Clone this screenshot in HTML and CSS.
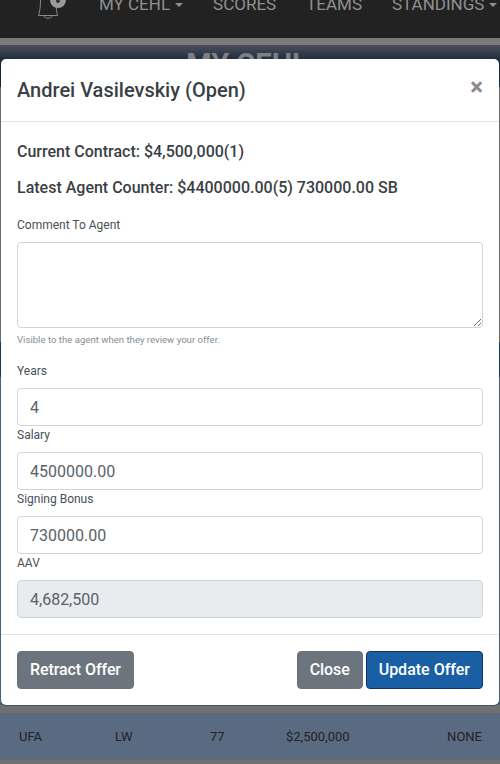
FILE: index.html
```html
<!DOCTYPE html>
<html lang="en">
<head>
  <meta charset="UTF-8">
  <title>Andrei Vasilevskiy (Open)</title>
  <link rel="stylesheet" href="styles.css">
</head>
<body>
  <div class="page">
    <nav class="navbar">
      <svg class="bell" viewBox="37 0 32 22" fill="none">
        <path d="M40.5 0C40.5 6 40 11 38.5 15.5H57.5C56.5 11 56 8 56 0" stroke="#8a8a8a" stroke-width="1"/>
        <path d="M44 16C45 19 51 19 52 16" stroke="#8a8a8a" stroke-width="1"/>
        <circle cx="58" cy="0" r="8" fill="#9a9a9a"/>
        <circle cx="58" cy="1" r="2" fill="#333"/>
      </svg>
      <a class="nav-link caret">MY CEHL</a>
      <a class="nav-link">SCORES</a>
      <a class="nav-link">TEAMS</a>
      <a class="nav-link caret">STANDINGS</a>
    </nav>
    <div class="band"></div>
    <div class="page-head"><h1>MY CEHL</h1></div>
    <div class="page-grey"></div>
    <div class="page-navy"></div>
    <div class="page-slate"></div>
    <div class="page-gap"></div>
    <div class="table-row">
      <span>UFA</span>
      <span>LW</span>
      <span>77</span>
      <span>$2,500,000</span>
      <span class="last">NONE</span>
    </div>
  </div>

  <div class="modal">
    <div class="modal-header">
      <h5>Andrei Vasilevskiy (Open)</h5>
      <span class="close-x">&times;</span>
    </div>
    <div class="modal-body">
      <p class="info">Current Contract: $4,500,000(1)</p>
      <p class="info">Latest Agent Counter: $4400000.00(5) 730000.00 SB</p>
      <label class="comment-label">Comment To Agent</label>
      <textarea class="field comment"></textarea>
      <small class="hint">Visible to the agent when they review your offer.</small>
      <label class="years-label">Years</label>
      <input class="field" value="4">
      <label>Salary</label>
      <input class="field" value="4500000.00">
      <label>Signing Bonus</label>
      <input class="field" value="730000.00">
      <label>AAV</label>
      <input class="field" value="4,682,500" disabled>
    </div>
    <div class="modal-footer">
      <button class="btn grey">Retract Offer</button>
      <div class="right-btns">
        <button class="btn grey">Close</button>
        <button class="btn blue">Update Offer</button>
      </div>
    </div>
  </div>
</body>
</html>
```

FILE: styles.css
```css
html, body {
  margin: 0;
  height: 764px;
  overflow: hidden;
}
body {
  font-family: Roboto, "Liberation Sans", sans-serif;
  color: #212529;
  position: relative;
}
.page {
  height: 764px;
  display: flex;
  flex-direction: column;
  background: #707070;
}
.navbar {
  height: 38px;
  background: #222;
  display: flex;
  align-items: flex-start;
  padding-left: 37px;
  overflow: hidden;
  flex-shrink: 0;
}
.bell {
  width: 32px;
  height: 22px;
  margin-right: 30px;
  flex-shrink: 0;
}
.nav-link {
  font-size: 17px;
  line-height: 24px;
  color: #909090;
  margin-top: -8px;
  margin-right: 30px;
  white-space: nowrap;
}
.nav-link.caret::after {
  content: "";
  display: inline-block;
  margin-left: 5px;
  vertical-align: 3px;
  border-top: 4.5px solid #909090;
  border-left: 4.5px solid transparent;
  border-right: 4.5px solid transparent;
}
.band {
  height: 7px;
  background: #7b7b7b;
  flex-shrink: 0;
}
.page-head {
  height: 42px;
  background: linear-gradient(#4b4f5a 0%, #142336 45%, #0d2a44 100%);
  text-align: center;
  overflow: hidden;
  flex-shrink: 0;
}
.page-head h1 {
  margin: 0;
  padding-right: 6px;
  font-size: 29px;
  font-weight: 700;
  line-height: 38px;
  color: #7d7f85;
}
.page-grey {
  height: 255px;
  background: #6a6a6a;
}
.page-navy {
  height: 35px;
  background: #0e3a5c;
}
.page-slate {
  height: 328px;
  background: #4a6076;
}
.page-gap {
  height: 8px;
}
.table-row {
  height: 47px;
  background: #5a6a80;
  display: grid;
  grid-template-columns: 96px 95px 76px 1fr 60px;
  align-items: center;
  padding: 0 18px 0 19px;
  font-size: 13px;
  color: #222;
  flex-shrink: 0;
}
.last { text-align: right; }
.modal {
  position: absolute;
  top: 59px;
  left: 1px;
  right: 1px;
  height: 646px;
  background: #fff;
  border-radius: 5px;
  box-shadow: 0 1px 0 #4a5260;
  display: flex;
  flex-direction: column;
  overflow: hidden;
}
.modal-header {
  height: 63px;
  box-sizing: border-box;
  border-bottom: 1px solid #dee2e6;
  padding: 0 16px;
  display: flex;
  align-items: center;
  justify-content: space-between;
  flex-shrink: 0;
}
.modal-header h5 {
  margin: 0;
  font-size: 20px;
  font-weight: 500;
  color: #3a3f45;
}
.close-x {
  font-size: 24px;
  font-weight: 700;
  color: #8a8a8a;
  line-height: 1;
  margin-top: -7px;
}
.modal-body {
  flex: 1;
  padding: 18px 16px 0;
  display: flex;
  flex-direction: column;
}
.info {
  margin: 0 0 12px;
  font-size: 16px;
  line-height: 24px;
  font-weight: 500;
  color: #3a3f45;
}
label {
  font-size: 12px;
  line-height: 18px;
  color: #495057;
  margin-bottom: 8px;
}
.comment-label { margin-top: 4px; }
.years-label { margin-top: 15px; }
.field {
  display: block;
  box-sizing: border-box;
  width: 100%;
  height: 38px;
  border: 1px solid #ced4da;
  border-radius: 4px;
  padding: 6px 12px;
  font-family: inherit;
  font-size: 16px;
  color: #5a6168;
  background: #fff;
  flex-shrink: 0;
}
.field:disabled {
  background: #e9ecef;
  opacity: 1;
}
.comment {
  height: 86px;
  resize: both;
}
.hint {
  margin-top: 4px;
  font-size: 9.6px;
  line-height: 15px;
  color: #868e96;
}
.modal-footer {
  height: 71px;
  box-sizing: border-box;
  border-top: 1px solid #dee2e6;
  padding: 0 16px;
  display: flex;
  align-items: center;
  justify-content: space-between;
  flex-shrink: 0;
}
.right-btns {
  display: flex;
  gap: 3px;
}
.btn {
  height: 38px;
  padding: 0 12px 2px;
  border: 1px solid #6c757d;
  border-radius: 4px;
  font-family: inherit;
  font-size: 16px;
  font-weight: 500;
  color: #fff;
  background: #6c757d;
}
.btn.grey { letter-spacing: -0.08px; }
.btn.blue {
  background: #1a5fa3;
  border-color: #0e3768;
}
```
